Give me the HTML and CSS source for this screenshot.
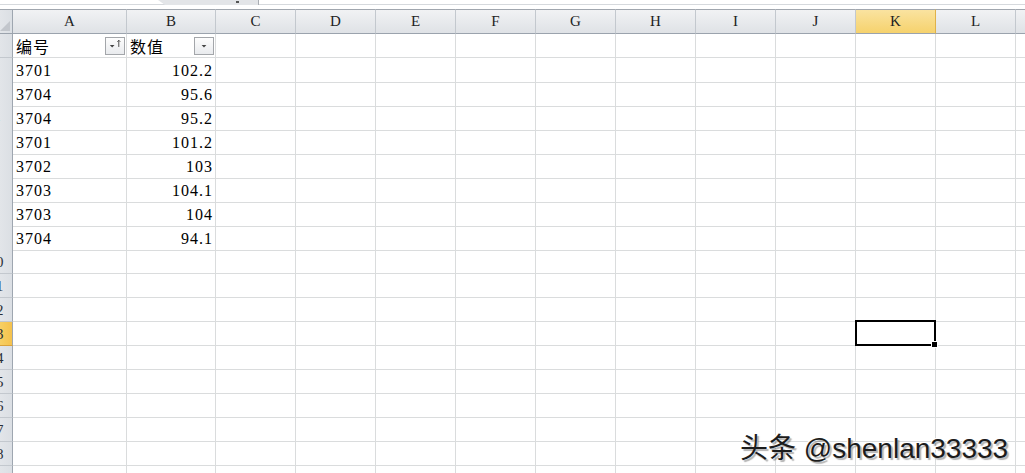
FILE: index.html
```html
<html>
  <head>
    <link rel="stylesheet" href="styles.css">
    <title>Sheet1</title>
  </head>
  <body>
    <div class="strip"><div class="tab"><i></i></div></div>
    <div class="sheet">
      <div class="row head">
        <div class="rh corner"><b></b></div>
        <div class="ch">A</div><div class="ch">B</div><div class="ch">C</div><div class="ch">D</div>
        <div class="ch">E</div><div class="ch">F</div><div class="ch">G</div><div class="ch">H</div>
        <div class="ch">I</div><div class="ch">J</div><div class="ch on">K</div><div class="ch">L</div>
        <div class="ch">M</div>
      </div>

      <div class="row">
        <div class="rh"><span>1</span></div>
        <div class="c fcell"><span>编号</span>
          <span class="fbtn">
            <svg width="19" height="17" viewBox="0 0 19 17"><path d="M4 8h5l-2.5 2.5z" fill="#444"/><path d="M13.5 10V3M12 4.5l1.5-1.5 1.5 1.5" stroke="#444" fill="none"/></svg>
          </span>
        </div>
        <div class="c fcell"><span>数值</span>
          <span class="fbtn">
            <svg width="19" height="17" viewBox="0 0 19 17"><path d="M7 8h5l-2.5 2.5z" fill="#444"/></svg>
          </span>
        </div>
        <div class="c"></div><div class="c"></div><div class="c"></div><div class="c"></div><div class="c"></div>
        <div class="c"></div><div class="c"></div><div class="c"></div><div class="c"></div><div class="c"></div><div class="c"></div>
      </div>

      <div class="row">
        <div class="rh"><span>2</span></div>
        <div class="c">3701</div><div class="c num">102.2</div>
        <div class="c"></div><div class="c"></div><div class="c"></div><div class="c"></div><div class="c"></div>
        <div class="c"></div><div class="c"></div><div class="c"></div><div class="c"></div><div class="c"></div><div class="c"></div>
      </div>
      <div class="row">
        <div class="rh"><span>3</span></div>
        <div class="c">3704</div><div class="c num">95.6</div>
        <div class="c"></div><div class="c"></div><div class="c"></div><div class="c"></div><div class="c"></div>
        <div class="c"></div><div class="c"></div><div class="c"></div><div class="c"></div><div class="c"></div><div class="c"></div>
      </div>
      <div class="row">
        <div class="rh"><span>4</span></div>
        <div class="c">3704</div><div class="c num">95.2</div>
        <div class="c"></div><div class="c"></div><div class="c"></div><div class="c"></div><div class="c"></div>
        <div class="c"></div><div class="c"></div><div class="c"></div><div class="c"></div><div class="c"></div><div class="c"></div>
      </div>
      <div class="row">
        <div class="rh"><span>5</span></div>
        <div class="c">3701</div><div class="c num">101.2</div>
        <div class="c"></div><div class="c"></div><div class="c"></div><div class="c"></div><div class="c"></div>
        <div class="c"></div><div class="c"></div><div class="c"></div><div class="c"></div><div class="c"></div><div class="c"></div>
      </div>
      <div class="row">
        <div class="rh"><span>6</span></div>
        <div class="c">3702</div><div class="c num">103</div>
        <div class="c"></div><div class="c"></div><div class="c"></div><div class="c"></div><div class="c"></div>
        <div class="c"></div><div class="c"></div><div class="c"></div><div class="c"></div><div class="c"></div><div class="c"></div>
      </div>
      <div class="row">
        <div class="rh"><span>7</span></div>
        <div class="c">3703</div><div class="c num">104.1</div>
        <div class="c"></div><div class="c"></div><div class="c"></div><div class="c"></div><div class="c"></div>
        <div class="c"></div><div class="c"></div><div class="c"></div><div class="c"></div><div class="c"></div><div class="c"></div>
      </div>
      <div class="row">
        <div class="rh"><span>8</span></div>
        <div class="c">3703</div><div class="c num">104</div>
        <div class="c"></div><div class="c"></div><div class="c"></div><div class="c"></div><div class="c"></div>
        <div class="c"></div><div class="c"></div><div class="c"></div><div class="c"></div><div class="c"></div><div class="c"></div>
      </div>
      <div class="row">
        <div class="rh"><span>9</span></div>
        <div class="c">3704</div><div class="c num">94.1</div>
        <div class="c"></div><div class="c"></div><div class="c"></div><div class="c"></div><div class="c"></div>
        <div class="c"></div><div class="c"></div><div class="c"></div><div class="c"></div><div class="c"></div><div class="c"></div>
      </div>

      <div class="row">
        <div class="rh"><span>10</span></div>
        <div class="c"></div><div class="c"></div><div class="c"></div><div class="c"></div><div class="c"></div><div class="c"></div><div class="c"></div>
        <div class="c"></div><div class="c"></div><div class="c"></div><div class="c"></div><div class="c"></div><div class="c"></div>
      </div>
      <div class="row">
        <div class="rh"><span>11</span></div>
        <div class="c"></div><div class="c"></div><div class="c"></div><div class="c"></div><div class="c"></div><div class="c"></div><div class="c"></div>
        <div class="c"></div><div class="c"></div><div class="c"></div><div class="c"></div><div class="c"></div><div class="c"></div>
      </div>
      <div class="row">
        <div class="rh"><span>12</span></div>
        <div class="c"></div><div class="c"></div><div class="c"></div><div class="c"></div><div class="c"></div><div class="c"></div><div class="c"></div>
        <div class="c"></div><div class="c"></div><div class="c"></div><div class="c"></div><div class="c"></div><div class="c"></div>
      </div>
      <div class="row">
        <div class="rh on"><span>13</span></div>
        <div class="c"></div><div class="c"></div><div class="c"></div><div class="c"></div><div class="c"></div><div class="c"></div><div class="c"></div>
        <div class="c"></div><div class="c"></div><div class="c"></div><div class="c sel"></div><div class="c"></div><div class="c"></div>
      </div>
      <div class="row">
        <div class="rh"><span>14</span></div>
        <div class="c"></div><div class="c"></div><div class="c"></div><div class="c"></div><div class="c"></div><div class="c"></div><div class="c"></div>
        <div class="c"></div><div class="c"></div><div class="c"></div><div class="c"></div><div class="c"></div><div class="c"></div>
      </div>
      <div class="row">
        <div class="rh"><span>15</span></div>
        <div class="c"></div><div class="c"></div><div class="c"></div><div class="c"></div><div class="c"></div><div class="c"></div><div class="c"></div>
        <div class="c"></div><div class="c"></div><div class="c"></div><div class="c"></div><div class="c"></div><div class="c"></div>
      </div>
      <div class="row">
        <div class="rh"><span>16</span></div>
        <div class="c"></div><div class="c"></div><div class="c"></div><div class="c"></div><div class="c"></div><div class="c"></div><div class="c"></div>
        <div class="c"></div><div class="c"></div><div class="c"></div><div class="c"></div><div class="c"></div><div class="c"></div>
      </div>
      <div class="row">
        <div class="rh"><span>17</span></div>
        <div class="c"></div><div class="c"></div><div class="c"></div><div class="c"></div><div class="c"></div><div class="c"></div><div class="c"></div>
        <div class="c"></div><div class="c"></div><div class="c"></div><div class="c"></div><div class="c"></div><div class="c"></div>
      </div>
      <div class="row">
        <div class="rh"><span>18</span></div>
        <div class="c"></div><div class="c"></div><div class="c"></div><div class="c"></div><div class="c"></div><div class="c"></div><div class="c"></div>
        <div class="c"></div><div class="c"></div><div class="c"></div><div class="c"></div><div class="c"></div><div class="c"></div>
      </div>
      <div class="row">
        <div class="rh"><span>19</span></div>
        <div class="c"></div><div class="c"></div><div class="c"></div><div class="c"></div><div class="c"></div><div class="c"></div><div class="c"></div>
        <div class="c"></div><div class="c"></div><div class="c"></div><div class="c"></div><div class="c"></div><div class="c"></div>
      </div>
    </div>
    <div class="mark">头条 @shenlan33333</div>
  </body>
</html>
```

FILE: styles.css
```css
body {
  margin: 0;
  background: #fff;
  overflow: hidden;
  font-family: "Liberation Serif", "Noto Sans CJK SC", serif;
  color: #000;
}

.strip {
  height: 9px;
  background: linear-gradient(#fff 4px, #d6d9dd 4px 5px, #fff 5px);
  display: flex;
}
.tab {
  margin-left: 158px;
  width: 100px;
  height: 5px;
  background: #e3e5e8;
  border-right: 1px solid #a9adb3;
  clip-path: polygon(0 0, 100% 0, 100% 100%, 7% 100%);
  display: flex;
  justify-content: flex-end;
}
.tab i {
  width: 3px;
  height: 2px;
  margin: 1px 19px 0 0;
  background: #555;
}

.sheet {
  width: 1025px;
  overflow: hidden;
}

.row {
  display: grid;
  grid-template-columns: 13px 114px 89px repeat(11, 80px);
  height: 24px;
}

.c {
  box-sizing: border-box;
  border-right: 1px solid #dadcdd;
  border-bottom: 1px solid #dadcdd;
  font-size: 16px;
  letter-spacing: 1px;
  line-height: 22px;
  padding: 2px 0 0 3px;
  white-space: nowrap;
}
.c.num {
  text-align: right;
  padding: 2px 2px 0 0;
}

.fcell {
  display: flex;
  justify-content: space-between;
  align-items: center;
  padding-top: 0;
  padding-right: 1px;
}
.c.fcell:nth-child(3) {
  padding-right: 1px;
}
.fcell > span:first-child {
  font-family: "Noto Sans CJK SC", sans-serif;
  font-size: 16px;
  align-self: flex-end;
  line-height: 22px;
}
.fbtn {
  box-sizing: border-box;
  width: 20px;
  height: 18px;
  border: 1px solid #a3a6aa;
  background: linear-gradient(#fdfdfd, #e9ebee);
  display: flex;
  align-items: center;
  justify-content: center;
}
.fbtn svg {
  display: block;
}

.head {
  height: 25px;
}
.head .ch,
.head .rh {
  border-top: 1px solid #a0a6ae;
  border-bottom: 1px solid #9ba3ad;
}
.ch {
  box-sizing: border-box;
  background: linear-gradient(#f1f2f4, #dfe2e6);
  border-right: 1px solid #c3c8ce;
  text-align: center;
  font-size: 15px;
  line-height: 23px;
  color: #222;
}
.ch.on {
  background: linear-gradient(#fae3a0, #f6d26d);
  border-right-color: #e0b24a;
}

.rh {
  box-sizing: border-box;
  background: linear-gradient(90deg, #e2e5e9, #dbdfe4);
  border-right: 1px solid #9ea6b0;
  border-bottom: 1px solid #c3c8ce;
  overflow: hidden;
  display: flex;
  justify-content: flex-end;
}
.rh span {
  flex-shrink: 0;
  width: 34px;
  margin-right: -1px;
  text-align: center;
  font-size: 15px;
  line-height: 24px;
  color: #2a2f38;
}
.rh.on {
  background: linear-gradient(90deg, #f7cf63, #f5c24d);
  border-bottom-color: #d9a23c;
}
.corner {
  position: relative;
}
.corner b {
  position: absolute;
  right: 2px;
  bottom: 2px;
  width: 0;
  height: 0;
  border-left: 10px solid transparent;
  border-bottom: 10px solid #c2c6cc;
}

.sel {
  position: relative;
}
.sel::after {
  content: "";
  position: absolute;
  top: -2px;
  left: -1px;
  right: -1px;
  bottom: -1px;
  border: 2px solid #000;
}
.sel::before {
  content: "";
  position: absolute;
  right: -3px;
  bottom: -3px;
  width: 5px;
  height: 5px;
  background: #000;
  border: 1px solid #fff;
  z-index: 1;
}

.mark {
  position: absolute;
  left: 740px;
  top: 426px;
  font-family: "Liberation Sans", "Noto Sans CJK SC", sans-serif;
  font-size: 28px;
  color: #1c1c1c;
  text-shadow: 2px 2px 1px rgba(0, 0, 0, 0.3), -1px -1px 0 #fff, 1px -1px 0 #fff, -1px 1px 0 #fff;
  white-space: nowrap;
}
```
